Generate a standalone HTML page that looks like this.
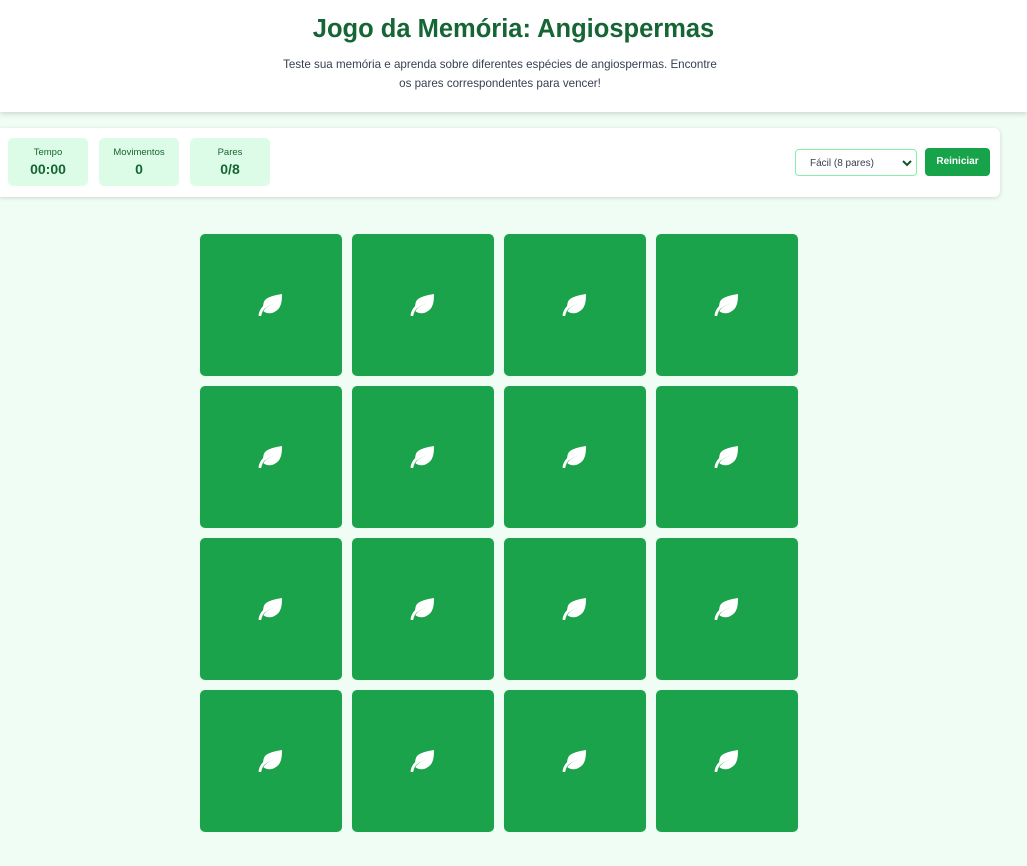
<!DOCTYPE html>
<html><head><meta charset="utf-8"><style>
*{box-sizing:border-box;margin:0;padding:0}
body{width:1027px;height:866px;background:#f0fdf4;font-family:"Liberation Sans",sans-serif;overflow:hidden;position:relative}
header{position:absolute;left:0;top:0;width:1027px;height:112px;background:#fff;box-shadow:0 2px 5px rgba(0,0,0,.15);text-align:center}
h1{position:absolute;top:15px;width:100%;font-size:25.5px;font-weight:bold;color:#166534}
header p{position:absolute;top:55px;left:278px;width:444px;font-size:11.6px;line-height:19px;color:#374151}
.panel{position:absolute;left:0;top:128px;width:1000px;height:69px;background:#fff;border-radius:0 6px 6px 0;box-shadow:0 1px 4px rgba(0,0,0,.15)}
.stat{position:absolute;top:10px;width:80px;height:48px;background:#dcfce7;border-radius:5px;text-align:center;color:#166534}
.stat .l{font-size:9.5px;margin-top:10px;line-height:10px}
.stat .v{font-size:14px;font-weight:bold;margin-top:3px}
.sel{position:absolute;left:795px;top:21px;width:122px;height:27px;border:1px solid #86efac;border-radius:4px;font-size:10px;color:#374151;padding:8px 0 0 14px}
.sel svg{position:absolute;right:4px;top:9px}
.btn{position:absolute;left:925px;top:20px;width:65px;height:28px;background:#16a34a;border-radius:4px;color:#fff;font-size:10px;font-weight:bold;text-align:center;line-height:28px}
.card{position:absolute;width:142px;height:142px;background:#1aa34a;border-radius:5px;display:flex;align-items:center;justify-content:center}
</style></head><body>
<header><h1>Jogo da Memória: Angiospermas</h1>
<p>Teste sua memória e aprenda sobre diferentes espécies de angiospermas. Encontre<br>os pares correspondentes para vencer!</p></header>
<div class="panel">
<div class="stat" style="left:8px"><div class="l">Tempo</div><div class="v">00:00</div></div>
<div class="stat" style="left:99px"><div class="l">Movimentos</div><div class="v">0</div></div>
<div class="stat" style="left:190px"><div class="l">Pares</div><div class="v">0/8</div></div>
<div class="sel">Fácil (8 pares)<svg width="10" height="8" viewBox="0 0 10 8"><path d="M1 2l4 4 4-4" stroke="#14532d" stroke-width="2" fill="none"/></svg></div>
<div class="btn">Reiniciar</div>
</div>
<div id="g"></div>
<script>
var s='';for(var r=0;r<4;r++)for(var c=0;c<4;c++){s+='<div class="card" style="left:'+(200+c*152)+'px;top:'+(234+r*152)+'px"><svg width="26" height="22" viewBox="0 0 26 22"><path d="M7 6C11 2 19 1 24 0C24 8 23 14 18 17C14 20 9 20 5 17C5 12 5 9 7 6Z" fill="#fff"/><path d="M3 21C4 15 8 11 15 9" stroke="#1aa34a" stroke-width="2.2" fill="none"/><path d="M2 21C3 15 7 11 14 9" stroke="#fff" stroke-width="2.8" fill="none" stroke-linecap="round"/></svg></div>'}
document.getElementById('g').innerHTML=s;
</script>
</body></html>
